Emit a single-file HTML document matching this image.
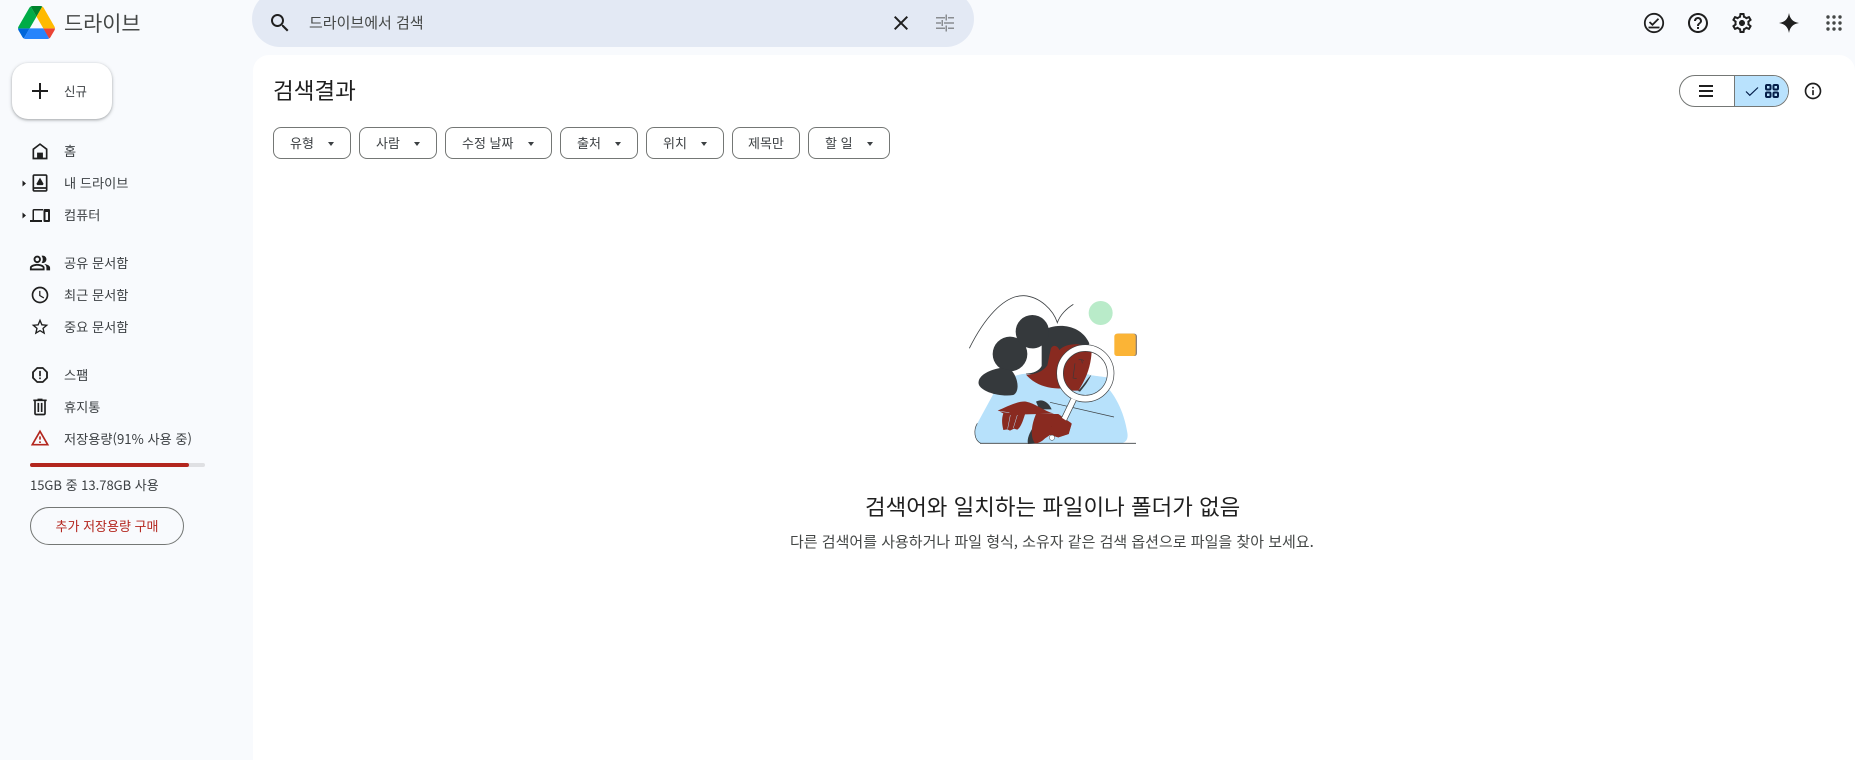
<!DOCTYPE html>
<html lang="ko">
<head>
<meta charset="utf-8">
<title>드라이브</title>
<style>
html,body{margin:0;padding:0;width:1855px;height:760px;overflow:hidden;background:#f8fafd}
body{position:relative;font-family:"Liberation Sans","Noto Sans CJK KR",sans-serif;color:#1f1f1f}
.a{position:absolute}
.t{position:absolute;white-space:nowrap;line-height:20px;font-size:13.2px;color:#3c4043;font-family:"Noto Sans CJK KR","Liberation Sans",sans-serif}
svg{position:absolute;display:block}
.i{fill:#1f1f1f}
.chip{position:absolute;top:127px;height:30px;border:1px solid #747775;border-radius:8px;background:#fff;font:13px/30px "Noto Sans CJK KR",sans-serif;color:#3c4043;box-sizing:content-box}
.chip span{position:absolute;top:0;white-space:nowrap}
.chip i{position:absolute;top:14px;width:0;height:0;border-left:3.5px solid transparent;border-right:3.5px solid transparent;border-top:4px solid #3c4043}
</style>
</head>
<body>
<!-- logo -->
<svg style="left:18px;top:6px" width="37" height="33" viewBox="0 0 87.3 78">
<path d="m6.6 66.85 3.85 6.65c.8 1.4 1.95 2.5 3.3 3.3l13.75-23.8h-27.5c0 1.55.4 3.1 1.2 4.5z" fill="#0066da"/>
<path d="m43.65 25-13.75-23.8c-1.35.8-2.5 1.9-3.3 3.3l-25.4 44a9.06 9.06 0 0 0 -1.2 4.5h27.5z" fill="#00ac47"/>
<path d="m73.55 76.8c1.35-.8 2.5-1.9 3.3-3.3l1.6-2.75 7.65-13.25c.8-1.4 1.2-2.95 1.2-4.5h-27.502l5.852 11.5z" fill="#ea4335"/>
<path d="m43.65 25 13.75-23.8c-1.35-.8-2.9-1.2-4.5-1.2h-18.5c-1.6 0-3.15.45-4.5 1.2z" fill="#00832d"/>
<path d="m59.8 53h-32.3l-13.75 23.8c1.35.8 2.9 1.2 4.5 1.2h50.8c1.6 0 3.15-.45 4.5-1.2z" fill="#2684fc"/>
<path d="m73.4 26.5-12.7-22c-.8-1.4-1.95-2.5-3.3-3.3l-13.75 23.8 16.15 28h27.45c0-1.55-.4-3.1-1.2-4.5z" fill="#ffba00"/>
</svg>
<div class="t" style="left:64px;top:12px;font-size:20.8px;color:#444746">드라이브</div>

<!-- search -->
<div class="a" style="left:252px;top:-9px;width:722px;height:56px;border-radius:28px;background:#e3e9f4"></div>
<svg style="left:268px;top:11px" width="24" height="24" viewBox="0 0 24 24"><path class="i" d="M15.5 14h-.79l-.28-.27C15.41 12.59 16 11.11 16 9.5 16 5.91 13.09 3 9.5 3S3 5.91 3 9.5 5.91 16 9.5 16c1.61 0 3.09-.59 4.23-1.57l.27.28v.79l5 4.99L20.49 19l-4.99-5zm-6 0C7.01 14 5 11.99 5 9.5S7.01 5 9.5 5 14 7.01 14 9.5 11.99 14 9.5 14z"/></svg>
<div class="t" style="left:309px;top:13px;font-size:15px;color:#444746">드라이브에서 검색</div>
<svg style="left:889px;top:11px" width="24" height="24" viewBox="0 0 24 24"><path class="i" d="M19 6.41L17.59 5 12 10.59 6.41 5 5 6.41 10.59 12 5 17.59 6.41 19 12 13.41 17.59 19 19 17.59 13.41 12z"/></svg>
<svg style="left:933px;top:11px" width="24" height="24" viewBox="0 0 24 24"><path fill="#8a8d91" d="M3 6h9v1.500H3zM15 6h6v1.500h-6zM12.500 3.500H14v6h-1.500zM3 11.200h5v1.500H3zM11 11.200h10v1.500H11zM8.500 9h1.500v6H8.500zM3 16.500h9v1.500H3zM15 16.500h6v1.500h-6zM12.500 14.500H14v6h-1.500z"/></svg>

<!-- top right icons -->
<svg style="left:1642px;top:11px" width="24" height="24" viewBox="0 0 24 24"><circle cx="12" cy="12" r="9.200" fill="none" stroke="#1f1f1f" stroke-width="1.800"/><path d="M7.500 11l3 2.800 6-6" fill="none" stroke="#1f1f1f" stroke-width="1.800"/><path d="M6.500 16.500h11" stroke="#1f1f1f" stroke-width="1.800"/></svg>
<svg style="left:1686px;top:11px" width="24" height="24" viewBox="0 0 24 24"><path class="i" d="M11 18h2v-2h-2v2zm1-16C6.480 2 2 6.480 2 12s4.480 10 10 10 10-4.480 10-10S17.520 2 12 2zm0 18c-4.410 0-8-3.590-8-8s3.590-8 8-8 8 3.590 8 8-3.590 8-8 8zm0-14c-2.210 0-4 1.790-4 4h2c0-1.100.9-2 2-2s2 .9 2 2c0 2-3 1.750-3 5h2c0-2.250 3-2.500 3-5 0-2.210-1.790-4-4-4z"/></svg>
<svg style="left:1730px;top:11px" width="24" height="24" viewBox="0 0 24 24"><path class="i" d="M19.430 12.980c.04-.32.07-.64.07-.98 0-.34-.03-.66-.07-.98l2.110-1.650c.19-.15.24-.42.12-.64l-2-3.460c-.09-.16-.26-.25-.44-.25-.06 0-.12.01-.17.03l-2.490 1c-.52-.4-1.080-.73-1.690-.98l-.38-2.650C14.460 2.180 14.250 2 14 2h-4c-.25 0-.46.18-.49.42l-.38 2.650c-.61.25-1.170.59-1.690.98l-2.490-1c-.06-.02-.12-.03-.18-.03-.17 0-.34.09-.43.25l-2 3.460c-.13.22-.07.49.12.64l2.110 1.650c-.04.32-.07.65-.07.98 0 .33.03.66.07.98l-2.110 1.650c-.19.15-.24.42-.12.64l2 3.460c.09.16.26.25.44.25.06 0 .12-.01.17-.03l2.490-1c.52.4 1.080.73 1.690.98l.38 2.650c.03.24.24.42.49.42h4c.25 0 .46-.18.49-.42l.38-2.650c.61-.25 1.170-.59 1.690-.98l2.490 1c.06.02.12.03.18.03.17 0 .34-.09.43-.25l2-3.460c.12-.22.07-.49-.12-.64l-2.110-1.650zm-1.980-1.710c.04.31.05.52.05.73 0 .21-.02.43-.05.73l-.14 1.130.89.7 1.080.84-.7 1.210-1.270-.51-1.040-.42-.9.68c-.43.32-.84.56-1.250.73l-1.060.43-.16 1.130-.2 1.350h-1.400l-.19-1.350-.16-1.130-1.060-.43c-.43-.18-.83-.41-1.230-.71l-.91-.7-1.060.43-1.270.51-.7-1.210 1.080-.84.89-.7-.14-1.130c-.03-.31-.05-.54-.05-.74s.02-.43.05-.73l.14-1.130-.89-.7-1.080-.84.7-1.210 1.270.51 1.040.42.9-.68c.43-.32.84-.56 1.250-.73l1.060-.43.16-1.130.2-1.350h1.390l.19 1.350.16 1.130 1.060.43c.43.18.83.41 1.230.71l.91.7 1.060-.43 1.270-.51.7 1.210-1.070.85-.89.7.14 1.130zM12 9c-1.660 0-3 1.340-3 3s1.340 3 3 3 3-1.340 3-3-1.340-3-3-3z"/></svg>
<svg style="left:1777px;top:11px" width="24" height="24" viewBox="0 0 24 24"><path fill="#1f1f1f" d="M12 2C13 8 16 11 22 12 16 13 13 16 12 22 11 16 8 13 2 12 8 11 11 8 12 2z"/></svg>
<svg style="left:1822px;top:11px" width="24" height="24" viewBox="0 0 24 24" fill="#444746"><circle cx="6" cy="6" r="1.700"/><circle cx="12" cy="6" r="1.700"/><circle cx="18" cy="6" r="1.700"/><circle cx="6" cy="12" r="1.700"/><circle cx="12" cy="12" r="1.700"/><circle cx="18" cy="12" r="1.700"/><circle cx="6" cy="18" r="1.700"/><circle cx="12" cy="18" r="1.700"/><circle cx="18" cy="18" r="1.700"/></svg>

<!-- new button -->
<div class="a" style="left:12px;top:63px;width:100px;height:56px;border-radius:16px;background:#fff;box-shadow:0 1px 2px rgba(60,64,67,.3),0 1px 3px 1px rgba(60,64,67,.15)"></div>
<svg style="left:28px;top:79px" width="24" height="24" viewBox="0 0 24 24"><path class="i" d="M20 13h-7v7h-2v-7H4v-2h7V4h2v7h7z"/></svg>
<div class="t" style="left:64px;top:81px;font-size:12.500px">신규</div>

<!-- nav -->
<svg style="left:30px;top:141px" width="20" height="20" viewBox="0 0 24 24"><path class="i" d="M12 2.500L3 9.300V22h18V9.300L12 2.500zm7 17.500h-3.500v-6h-7v6H5V10.300l7-5.300 7 5.300V20z"/><path class="i" d="M9.500 15h5v5.500h-5z"/></svg>
<div class="t" style="left:64px;top:141px">홈</div>

<svg style="left:22px;top:180px" width="5" height="7" viewBox="0 0 5 7"><path d="M.5 .5l3.500 3-3.500 3z" fill="#1f1f1f"/></svg>
<svg style="left:30px;top:173px" width="20" height="20" viewBox="0 0 24 24"><path class="i" d="M5 1.500h14c1.100 0 2 .9 2 2v17c0 1.100-.9 2-2 2H5c-1.100 0-2-.9-2-2v-17c0-1.100.9-2 2-2zm0 2v13.500h14V3.500H5zm0 15.500v1.500h14V19H5z"/><path class="i" d="M12 5.500l4.300 7.500-1 1.500H8.700l-1-1.500L12 5.500z"/></svg>
<div class="t" style="left:64px;top:173px">내 드라이브</div>

<svg style="left:22px;top:212px" width="5" height="7" viewBox="0 0 5 7"><path d="M.5 .5l3.500 3-3.500 3z" fill="#1f1f1f"/></svg>
<svg style="left:30px;top:205px" width="20" height="20" viewBox="0 0 20 20"><path class="i" d="M2.500 5.500c0-.9.6-1.500 1.500-1.500h9v1.500H4V15H2.500zM0 15h12v2H0z"/><path class="i" fill-rule="evenodd" d="M14.500 4h4.500c.6 0 1 .4 1 1v11c0 .6-.4 1-1 1h-4.500c-.6 0-1-.4-1-1V5c0-.6.4-1 1-1zm1 3v8h2.500V7z"/></svg>
<div class="t" style="left:64px;top:205px">컴퓨터</div>

<svg style="left:29px;top:252px" width="22" height="22" viewBox="0 0 24 24"><path class="i" d="M16.670 13.130C18.040 14.060 19 15.320 19 17v3h4v-3c0-2.180-3.570-3.470-6.330-3.870zM15 12c2.210 0 4-1.790 4-4s-1.790-4-4-4c-.47 0-.91.1-1.330.24C14.500 5.270 15 6.580 15 8s-.5 2.730-1.330 3.760c.42.14.86.24 1.330.24zM9 12c2.210 0 4-1.790 4-4s-1.790-4-4-4-4 1.790-4 4 1.790 4 4 4zm0-6c1.100 0 2 .9 2 2s-.9 2-2 2-2-.9-2-2 .9-2 2-2zM9 13c-2.670 0-8 1.340-8 4v3h16v-3c0-2.660-5.330-4-8-4zm6 5H3v-.99C3.200 16.290 6.300 15 9 15s5.800 1.290 6 2z"/></svg>
<div class="t" style="left:64px;top:253px">공유 문서함</div>

<svg style="left:30px;top:285px" width="20" height="20" viewBox="0 0 24 24"><path class="i" d="M11.990 2C6.470 2 2 6.480 2 12s4.470 10 9.990 10C17.520 22 22 17.520 22 12S17.520 2 11.990 2zM12 20c-4.420 0-8-3.580-8-8s3.580-8 8-8 8 3.580 8 8-3.580 8-8 8zm.5-13H11v6l5.250 3.150.75-1.230-4.500-2.670z"/></svg>
<div class="t" style="left:64px;top:285px">최근 문서함</div>

<svg style="left:30px;top:317px" width="20" height="20" viewBox="0 0 24 24"><path class="i" d="M22 9.240l-7.190-.62L12 2 9.190 8.630 2 9.240l5.460 4.730L5.820 21 12 17.270 18.180 21l-1.630-7.030L22 9.240zM12 15.400l-3.760 2.270 1-4.280-3.320-2.880 4.380-.38L12 6.100l1.710 4.040 4.380.38-3.320 2.880 1 4.280L12 15.400z"/></svg>
<div class="t" style="left:64px;top:317px">중요 문서함</div>

<svg style="left:30px;top:365px" width="20" height="20" viewBox="0 0 24 24"><path class="i" d="M15.730 2.500H8.270L2.500 8.270v7.460l5.770 5.770h7.460l5.770-5.770V8.270L15.730 2.500zM19.300 15L15 19.300H9L4.700 15V9L9 4.700h6L19.300 9v6z"/><path class="i" d="M11 7h2v6.500h-2zM11 15h2v2h-2z"/></svg>
<div class="t" style="left:64px;top:365px">스팸</div>

<svg style="left:30px;top:397px" width="20" height="20" viewBox="0 0 24 24"><path class="i" d="M15 3V2H9v1H4v2h1v15c0 1.100.9 2 2 2h10c1.100 0 2-.9 2-2V5h1V3h-5zm2 17H7V5h10v15zM9 7h2v11H9zm4 0h2v11h-2z"/></svg>
<div class="t" style="left:64px;top:397px">휴지통</div>

<svg style="left:30px;top:428px" width="20" height="20" viewBox="0 0 24 24"><path fill="#b3261e" d="M12 5.990L19.530 19H4.470L12 5.990M12 2L1 21h22L12 2zm1 14h-2v2h2v-2zm0-6h-2v4h2v-4z"/></svg>
<div class="t" style="left:64px;top:429px">저장용량(91% 사용 중)</div>

<div class="a" style="left:30px;top:463px;width:175px;height:4px;border-radius:2px;background:#dfe0e3"></div>
<div class="a" style="left:30px;top:463px;width:159px;height:4px;border-radius:2px;background:#b3261e"></div>
<div class="t" style="left:30px;top:475px;font-size:13px">15GB 중 13.78GB 사용</div>
<div class="a" style="left:30px;top:507px;width:152px;height:36px;border:1px solid #747775;border-radius:19px;text-align:center;font:13px/36px 'Noto Sans CJK KR',sans-serif;color:#b3261e">추가 저장용량 구매</div>

<!-- main panel -->
<div class="a" style="left:253px;top:55px;width:1602px;height:705px;background:#fff;border-radius:16px 16px 0 0"></div>
<div class="t" style="left:273px;top:80px;font-size:22.500px;color:#1f1f1f;line-height:20px">검색결과</div>

<!-- toggle -->
<div class="a" style="left:1679px;top:75px;width:108px;height:30px;border:1px solid #747775;border-radius:16px;overflow:hidden;background:#fff">
  <div class="a" style="left:54px;top:0;width:54px;height:30px;background:#b9e2fd;border-left:1px solid #747775"></div>
</div>
<svg style="left:1694px;top:79px" width="24" height="24" viewBox="0 0 24 24"><path class="i" d="M5 6h14v2H5zM5 11h14v2H5zM5 16h14v2H5z"/></svg>
<svg style="left:1744px;top:83px" width="16" height="16" viewBox="0 0 16 16"><path d="M2 8.500l3.800 3.800L14 4.500" fill="none" stroke="#041e49" stroke-width="1.200"/></svg>
<svg style="left:1763px;top:82px" width="18" height="18" viewBox="0 0 18 18"><g fill="none" stroke="#041e49" stroke-width="2"><rect x="3" y="3" width="4.500" height="4.500" rx="1"/><rect x="10.500" y="3" width="4.500" height="4.500" rx="1"/><rect x="3" y="10.500" width="4.500" height="4.500" rx="1"/><rect x="10.500" y="10.500" width="4.500" height="4.500" rx="1"/></g></svg>
<svg style="left:1803px;top:81px" width="20" height="20" viewBox="0 0 24 24"><path class="i" d="M11 7h2v2h-2zm0 4h2v6h-2zm1-9C6.480 2 2 6.480 2 12s4.480 10 10 10 10-4.480 10-10S17.520 2 12 2zm0 18c-4.410 0-8-3.590-8-8s3.590-8 8-8 8 3.590 8 8-3.590 8-8 8z"/></svg>

<!-- chips -->
<div class="chip" style="left:273px;width:76px"><span style="left:16px">유형</span><i style="left:54px"></i></div>
<div class="chip" style="left:359px;width:76px"><span style="left:16px">사람</span><i style="left:54px"></i></div>
<div class="chip" style="left:445px;width:105px"><span style="left:16px">수정 날짜</span><i style="left:82px"></i></div>
<div class="chip" style="left:560px;width:76px"><span style="left:16px">출처</span><i style="left:54px"></i></div>
<div class="chip" style="left:646px;width:76px"><span style="left:16px">위치</span><i style="left:54px"></i></div>
<div class="chip" style="left:732px;width:66px"><span style="left:15px">제목만</span></div>
<div class="chip" style="left:808px;width:80px"><span style="left:16px">할 일</span><i style="left:58px"></i></div>

<!-- illustration -->
<svg style="left:950px;top:280px" width="200" height="180" viewBox="0 0 600 540">
  <path d="M58,205 C100,120 160,45 222,47 C270,50 310,90 322,128 C330,105 350,85 370,73" fill="none" stroke="#3c4043" stroke-width="2.500"/>
  <circle cx="452" cy="99" r="36" fill="#b9ebc9"/>
  <rect x="497" y="161" width="64" height="67" rx="8" fill="#8a8078"/>
  <rect x="493" y="161" width="64" height="67" rx="8" fill="#fbb436"/>
  <!-- body -->
  <path d="M92,490 C72,480 70,450 82,430 L130,342 C150,305 185,285 230,280 L420,283 C480,310 520,380 532,458 C536,480 525,490 510,490 Z" fill="#b7e1fb"/>
  <path d="M92,490 C72,480 70,450 82,430" fill="none" stroke="#3c4043" stroke-width="2"/>
  <path d="M90,490 H558" stroke="#3c4043" stroke-width="2.500"/>
  <!-- hair -->
  <path fill="#35393c" d="M275,155 C310,128 390,128 418,190 L345,330 L270,285 L228,282 L228,200Z"/>
  <path fill="#fff" d="M228,198 C245,208 262,206 275,196 L275,258 C268,272 250,280 228,281 C215,282 205,282 195,285 L190,262 C215,255 228,235 228,198Z"/>
  <circle cx="180" cy="222" r="52" fill="#35393c"/>
  <circle cx="247" cy="155" r="50" fill="#35393c"/>
  <path fill="#35393c" d="M150,264 C110,272 82,290 86,312 C92,335 150,352 190,345 C210,335 205,295 185,272 Z"/>
  <!-- neck/face -->
  <path fill="#892a20" d="M228,284 C255,284 278,275 292,256 L302,208 C306,194 322,194 328,210 C345,192 375,190 398,195 L430,215 L395,330 L335,325 C290,328 250,310 228,284Z"/>
  <!-- lens content -->
  <path fill="#b7e1fb" d="M345,325 L395,340 C430,350 465,325 472,290 C450,290 430,285 415,285 Z" />
  <path fill="#fff" d="M424,208 C455,218 478,250 472,292 L418,285 Z"/>
  <path fill="#892a20" d="M372,208 L425,213 C423,255 412,290 385,332 L355,332 C330,305 335,245 372,208Z"/>
  <path d="M424,284 C412,296 402,314 384,333 L390,335 C403,320 416,302 424,284Z" fill="#35393c"/>
  <path d="M375,250 L369,294 L380,296 M386,240 C390,236 398,238 401,243 M395,240 L397,250" fill="none" stroke="#35393c" stroke-width="1.800"/>
  <circle cx="406" cy="280" r="76" fill="none" stroke="#3c4043" stroke-width="22"/>
  <circle cx="406" cy="280" r="76" fill="none" stroke="#fff" stroke-width="18"/>
  <!-- arm line -->
  <path d="M300,367 L492,411" stroke="#3c4043" stroke-width="2"/>
  <path fill="#35393c" d="M258,365 C275,355 295,365 305,388 L268,388Z"/>
  <path fill="#35393c" d="M252,438 C238,458 230,478 234,492 L258,490 L270,440Z"/>
  <!-- right arm + hand -->
  <path fill="#892a20" d="M258,402 L325,402 L365,430 L356,462 L325,472 L300,465 L285,475 C275,485 265,490 255,490 C240,470 244,435 258,402Z"/>
  <!-- left arm + fingers -->
  <path fill="#892a20" d="M143,392 C170,380 205,362 228,365 C255,370 280,392 312,401 L225,403 C218,425 212,442 202,449 L192,446 L180,452 L172,448 L160,450 C155,430 155,415 160,400Z"/>
  <path d="M181,405 L173,446 M202,405 L190,444 M143,393 L178,398" stroke="#b7e1fb" stroke-width="1.500" fill="none"/>
  <path d="M310,428 L340,450 M304,440 L332,462" stroke="#5c1a14" stroke-width="1.500" fill="none"/>
  <!-- handle -->
  <path d="M371,358 L340,422" stroke="#3c4043" stroke-width="19"/>
  <path d="M371,358 L340,422" stroke="#fff" stroke-width="15"/>
  <path fill="#892a20" d="M322,405 L365,432 L356,462 L325,472 L302,465 C302,440 308,420 322,405Z"/>
  <circle cx="306" cy="473" r="8" fill="#fff" stroke="#3c4043" stroke-width="1.500"/>
</svg>

<div class="t" style="left:865px;top:496px;font-size:22.400px;color:#1f1f1f">검색어와 일치하는 파일이나 폴더가 없음</div>
<div class="t" style="left:790px;top:532px;font-size:15px;color:#444746">다른 검색어를 사용하거나 파일 형식, 소유자 같은 검색 옵션으로 파일을 찾아 보세요.</div>
</body>
</html>
